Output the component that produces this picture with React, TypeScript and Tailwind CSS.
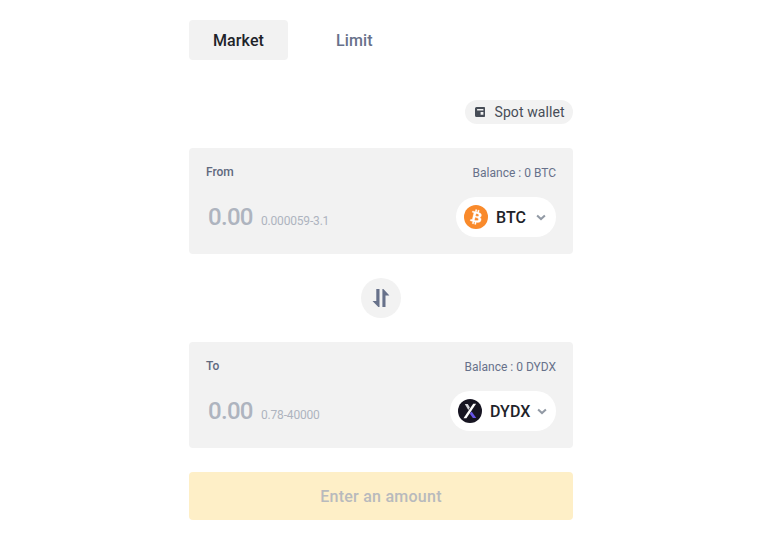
import React from 'react'

type PanelProps = {
    label: string
    range: string
    symbol: string
    icon: React.ReactNode
    pill: string
}

const BtcIcon = () => (
    <svg className="w-6 h-6" viewBox="0 0 32 32">
        <circle cx="16" cy="16" r="16" fill="#f98a2b" />
        <path
            fill="#fff"
            stroke="#fff"
            strokeWidth="0.4"
            d="M23.189 14.02c.314-2.096-1.283-3.223-3.465-3.975l.708-2.84-1.728-.43-.69 2.765c-.454-.114-.92-.22-1.385-.326l.695-2.783L15.596 6l-.708 2.839c-.376-.086-.746-.17-1.104-.26l.002-.009-2.384-.595-.46 1.846s1.283.294 1.256.312c.7.175.826.638.805 1.006l-.806 3.235c.048.012.11.03.18.057l-.183-.045-1.13 4.532c-.086.212-.303.531-.793.41.018.025-1.256-.313-1.256-.313l-.858 1.978 2.25.561c.418.105.828.215 1.231.318l-.715 2.872 1.727.43.708-2.84c.472.127.93.245 1.378.357l-.706 2.828 1.728.43.715-2.866c2.948.558 5.164.333 6.097-2.333.752-2.146-.037-3.385-1.588-4.192 1.13-.26 1.98-1.003 2.207-2.538zm-3.95 5.538c-.533 2.147-4.148.986-5.32.695l.95-3.805c1.172.293 4.929.872 4.37 3.11zm.535-5.569c-.487 1.953-3.495.96-4.47.717l.86-3.45c.975.243 4.118.696 3.61 2.733z"
        />
    </svg>
)

const DydxIcon = () => (
    <svg className="w-6 h-6" viewBox="0 0 24 24">
        <circle cx="12" cy="12" r="12" fill="#171522" />
        <path d="M6.8 5h3l2.1 3.4-1.6 2.5z" fill="#d5d5da" />
        <path d="M13.6 12.4l4.7 6.6h-3.4l-3.1-4.2z" fill="#6754e8" />
        <path d="M15.2 4.8h2.9L8.4 19.2H5.5z" fill="#fff" />
    </svg>
)

const Chevron = () => (
    <svg className="w-2.5 h-2.5" viewBox="0 0 10 10" fill="none">
        <path d="M1.1 3.4L5 7.1l3.9-3.7" stroke="#929aa5" strokeWidth="2" />
    </svg>
)

const Panel = ({ label, range, symbol, icon, pill }: PanelProps) => (
    <div className="w-full h-[106px] bg-[#f2f2f2] rounded px-[17px] pt-4 text-[#67718a]">
        <div className="flex justify-between items-center h-4 text-xs">
            <span className="font-medium text-[#5f697e]">{label}</span>
            <span className="pt-px">Balance : 0 {symbol}</span>
        </div>
        <div className="flex justify-between items-center mt-[17px]">
            <div className="flex items-baseline pl-0.5 text-[#aeb4bf]">
                <span className="w-[53px] text-2xl leading-10 font-medium tracking-[-0.7px]">0.00</span>
                <span className="text-xs tracking-[-0.18px]">{range}</span>
            </div>
            <div className={`flex items-center h-10 bg-white rounded-full pl-2 ${pill}`}>
                {icon}
                <span className="ml-2 flex-1 pt-px text-base font-medium text-[#1e2329]">{symbol}</span>
                <Chevron />
            </div>
        </div>
    </div>
)

export default function App() {
    return (
        <div className="w-full h-[558px] bg-white pt-5 pl-[189px] font-['Roboto',sans-serif]">
            <div className="w-96 flex flex-col">
                <div className="flex items-center h-10 text-base font-medium tracking-[0.1px]">
                    <div className="w-[99px] h-10 pt-0.5 flex items-center justify-center bg-[#f2f2f2] rounded text-[#1e2329]">
                        Market
                    </div>
                    <div className="ml-12 pt-0.5 text-[#67718a]">Limit</div>
                </div>
                <div className="self-end mt-10 flex items-center w-[108px] h-6 pl-2.5 bg-[#f2f2f2] rounded-full">
                    <svg className="w-2.5 h-2.5" viewBox="0 0 10 10">
                        <path
                            fillRule="evenodd"
                            fill="#474d57"
                            d="M1.5 0H9.2Q10 0 10 .8v8.4q0 .8-.8.8H1.5Q0 10 0 8.5v-7Q0 0 1.5 0zM2.1 2v1.5H8.4V2zM5.6 5v2.8H8.4V5z"
                        />
                    </svg>
                    <span className="ml-[9.5px] text-sm tracking-[0.1px] text-[#474d57]">Spot wallet</span>
                </div>
                <div className="mt-6">
                    <Panel label="From" range="0.000059-3.1" symbol="BTC" icon={<BtcIcon />} pill="w-[100px] pr-2.5" />
                </div>
                <div className="self-center my-6 w-10 h-10 rounded-full bg-[#f2f2f2] flex items-center justify-center">
                    <svg className="w-[18px] h-[18px]" viewBox="0 0 18 18" fill="#67718a">
                        <path d="M4.3 0h3.2v18H6.3L.5 12h3.8z" />
                        <path d="M10.4 0h1l6 6.4h-3.9V18h-3.1z" />
                    </svg>
                </div>
                <Panel label="To" range="0.78-40000" symbol="DYDX" icon={<DydxIcon />} pill="w-[106px] pr-[9px]" />
                <button className="mt-6 w-full h-12 pt-0.5 rounded bg-[#feefc7] text-base font-medium tracking-[0.25px] text-[#b8babd]">
                    Enter an amount
                </button>
            </div>
        </div>
    )
}
